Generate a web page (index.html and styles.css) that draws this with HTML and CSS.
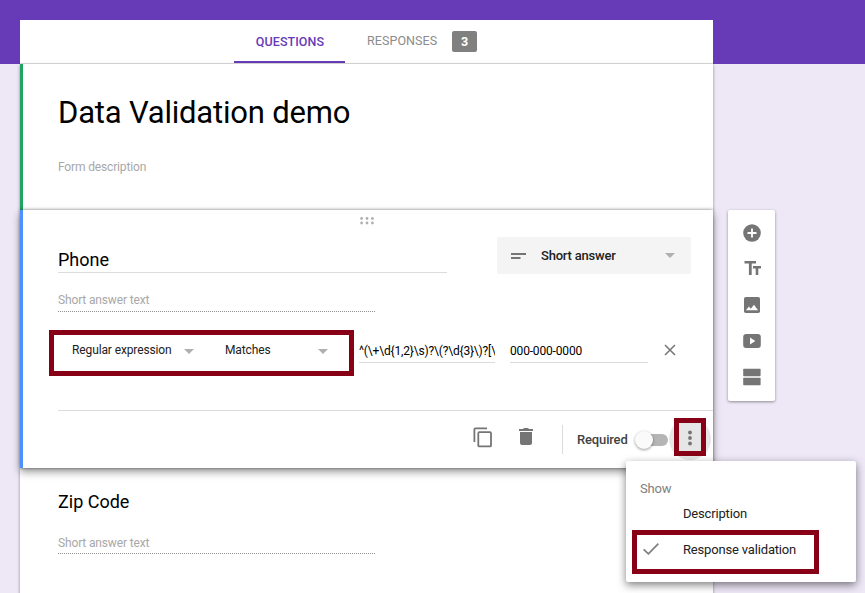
FILE: index.html
```html
<!DOCTYPE html>
<html lang="en">
<head>
<meta charset="utf-8">
<title>Data Validation demo</title>
<link rel="stylesheet" href="styles.css">
</head>
<body>
<div class="page">
  <main class="form">
    <nav class="tabs">
      <a class="tab tab-active">QUESTIONS</a>
      <a class="tab tab-responses">RESPONSES <span class="count">3</span></a>
    </nav>
    <section class="card intro">
      <h1 class="title">Data Validation demo</h1>
      <p class="hint">Form description</p>
    </section>
    <section class="card active">
      <svg class="drag" width="14" height="8" viewBox="0 0 14 8" fill="#b0b0b0"><circle cx="1.6" cy="1.5" r="1.4"/><circle cx="7" cy="1.5" r="1.4"/><circle cx="12.4" cy="1.5" r="1.4"/><circle cx="1.6" cy="6" r="1.4"/><circle cx="7" cy="6" r="1.4"/><circle cx="12.4" cy="6" r="1.4"/></svg>
      <div class="question-row">
        <div class="question-input">Phone</div>
        <div class="type-select">
          <svg width="15" height="6" viewBox="0 0 15 6" fill="#757575"><path d="M0 0h15v2H0zM0 4h9.500v2H0z"/></svg>
          <span class="type-name">Short answer</span>
          <span class="caret"></span>
        </div>
      </div>
      <div class="answer">Short answer text</div>
      <div class="validation">
        <div class="mark mark-rule">
          <span class="rule-kind">Regular expression</span><span class="caret"></span>
          <span class="rule-op">Matches</span><span class="caret"></span>
        </div>
        <div class="field pattern">^(\+\d{1,2}\s)?\(?\d{3}\)?[\</div>
        <div class="field message">000-000-0000</div>
        <svg class="clear" width="12" height="12" viewBox="0 0 12 12" stroke="#757575" stroke-width="1.500"><path d="M1 1l10 10M11 1L1 11"/></svg>
      </div>
      <div class="actions">
        <svg class="copy" width="20" height="21" viewBox="0 0 20 21" fill="none" stroke="#757575" stroke-width="1.800"><path d="M1.400 15V2.400a1 1 0 0 1 1-1H14"/><rect x="5.300" y="5.200" width="12.700" height="14.200" rx="1"/></svg>
        <svg class="trash" width="14" height="17" viewBox="0 0 14 17" fill="#757575"><path d="M0 1h4l1-1h4l1 1h4v2H0zM1 4h12v11a2 2 0 0 1-2 2H3a2 2 0 0 1-2-2z"/></svg>
        <span class="divider"></span>
        <span class="required">Required</span>
        <span class="toggle"><span class="knob"></span></span>
        <div class="more">
          <div class="mark mark-more"><svg width="4" height="16" viewBox="0 0 4 16" fill="#757575"><circle cx="2" cy="2.500" r="1.900"/><circle cx="2" cy="8" r="1.900"/><circle cx="2" cy="13.500" r="1.900"/></svg></div>
          <div class="menu">
            <div class="menu-title">Show</div>
            <div class="menu-item">Description</div>
            <div class="mark mark-item">
              <svg width="16" height="12" viewBox="0 0 16 12" fill="none" stroke="#808080" stroke-width="1.800"><path d="M.6 6.300l4.800 4.500L15.400.7"/></svg>
              <span>Response validation</span>
            </div>
          </div>
        </div>
      </div>
    </section>
    <section class="card next">
      <h2 class="question">Zip Code</h2>
      <div class="answer">Short answer text</div>
    </section>
  </main>
  <aside class="tools">
    <svg width="18" height="18" viewBox="0 0 18 18"><circle cx="9" cy="9" r="8.800" fill="#757575"/><path d="M9 4.500v9M4.500 9h9" stroke="#fff" stroke-width="1.800"/></svg>
    <svg width="18" height="18" viewBox="0 0 18 18" fill="#757575"><path d="M1.500 1H13v2.600H8.700V15H5.900V3.600H1.500zM10 6h8v2.500h-2.700V15h-2.600V8.500H10z"/></svg>
    <svg width="18" height="18" viewBox="0 0 18 18"><rect x="1" y="1" width="16" height="16" rx="1.800" fill="#757575"/><path d="M3 14.300l2.900-3.800 1.900 2.200 3.200-4 4 5.600z" fill="#fff"/></svg>
    <svg width="18" height="18" viewBox="0 0 18 18"><rect x=".2" y="2" width="17.600" height="14" rx="3" fill="#757575"/><path d="M7 5.400v7.200L12.300 9z" fill="#fff"/></svg>
    <svg width="18" height="18" viewBox="0 0 18 18" fill="#757575"><rect x=".2" y=".8" width="17.400" height="7.400" rx=".7"/><rect x=".2" y="9.800" width="17.400" height="7.400" rx=".7"/></svg>
  </aside>
</div>
</body>
</html>
```

FILE: styles.css
```css
* { box-sizing: border-box; }

body {
  margin: 0;
  height: 593px;
  overflow: hidden;
  background: linear-gradient(#673ab7 64px, #ede7f6 64px);
  font-family: Roboto, "Liberation Sans", sans-serif;
  font-size: 13px;
  color: #212121;
}

svg { display: block; flex: none; }

.page {
  display: flex;
  align-items: flex-start;
  gap: 15px;
  padding: 20px 0 0 20px;
}

.form { width: 693px; flex: none; }

.tabs {
  display: flex;
  height: 44px;
  padding-left: 214px;
  background: #fff;
  border-bottom: 1px solid #e0e0e0;
}

.tab {
  display: flex;
  align-items: center;
  height: 43px;
  font-size: 12.5px;
  letter-spacing: .07px;
  color: #8c8c8c;
}

.tab-active {
  width: 111px;
  justify-content: center;
  border-bottom: 2px solid #673ab7;
  padding: 2px 0 0 1px;
  font-weight: 500;
  color: #673ab7;
}

.tab-responses { margin-left: 22px; padding-bottom: 2px; }

.count {
  width: 25px;
  margin: 2px 0 0 15px;
  border-radius: 2px;
  background: #808080;
  color: #fff;
  font-weight: 700;
  line-height: 21px;
  text-align: center;
}

.card {
  background: #fff;
  box-shadow: 0 1px 3px rgba(0, 0, 0, .4);
}

.intro {
  height: 146px;
  padding: 28px 0 0 35px;
  border-left: 3px solid #1fa463;
}

.title {
  margin: 0;
  font-size: 31px;
  letter-spacing: -.2px;
  line-height: 42px;
  font-weight: 400;
  color: #000;
}

.hint {
  margin: 24px 0 0;
  font-size: 12px;
  letter-spacing: -.15px;
  line-height: 18px;
  color: #a8a8a8;
}

.active {
  position: relative;
  z-index: 1;
  height: 258px;
  padding: 7px 0 0 35px;
  border-left: 3px solid #4d90fe;
  box-shadow: 0 0 3px rgba(0, 0, 0, .45), 0 4px 8px rgba(0, 0, 0, .4);
}

.drag { margin-left: 302px; }

.question-row {
  display: flex;
  gap: 50px;
  margin-top: 12px;
  height: 37px;
}

.question-input {
  width: 389px;
  height: 36px;
  padding-top: 11px;
  border-bottom: 1px solid #dcdcdc;
  font-size: 18px;
  line-height: 24px;
  color: #000;
}

.type-select {
  display: flex;
  align-items: center;
  width: 194px;
  padding: 0 16px 0 14px;
  border-radius: 2px;
  background: #f4f4f4;
  font-weight: 500;
  letter-spacing: -.2px;
}

.type-name { flex: 1; margin-left: 15px; }

.caret {
  flex: none;
  border: 5px solid transparent;
  border-top-color: #b0b0b0;
  border-bottom: 0;
}

.answer {
  width: 317px;
  height: 22px;
  margin-top: 16px;
  border-bottom: 1px dotted #909090;
  font-size: 12px;
  letter-spacing: -.15px;
  line-height: 20px;
  color: #a8a8a8;
}

.mark { border: 5px solid #880015; }

.validation {
  display: flex;
  height: 46px;
  margin: 18px 0 0 -9px;
}

.mark-rule {
  display: flex;
  align-items: center;
  width: 305px;
  padding: 0 20px 6px 18px;
  font-size: 12px;
  letter-spacing: -.12px;
}

.rule-kind { width: 112px; }
.rule-op { width: 93px; margin-left: 31px; }
.rule-kind + .caret, .rule-op + .caret { margin-top: 3px; }

.field {
  height: 33px;
  padding-top: 11px;
  border-bottom: 1px solid #dcdcdc;
  font-size: 12px;
  letter-spacing: -.17px;
  line-height: 20px;
  color: #000;
  white-space: nowrap;
  overflow: hidden;
}

.pattern { width: 136px; margin-left: 5px; }
.message { width: 138px; margin-left: 15px; }
.clear { margin: 14px 0 0 16px; }

.actions {
  display: flex;
  align-items: center;
  height: 58px;
  margin-top: 34px;
  border-top: 1px solid #dcdcdc;
}

.copy { margin: -5px 0 0 415px; }
.trash { margin: -6px 0 0 26px; }
.divider { width: 1px; height: 29px; margin-left: 29px; background: #dcdcdc; }
.required { width: 58px; margin-left: 14px; font-weight: 500; letter-spacing: -.15px; color: #424242; }

.toggle {
  width: 33px;
  height: 12px;
  border-radius: 6px;
  background: linear-gradient(90deg, transparent 10px, #b5b5b5 10px);
}

.knob {
  display: block;
  width: 18px;
  height: 18px;
  margin-top: -3px;
  border-radius: 50%;
  background: #fafafa;
  box-shadow: 0 1px 3px rgba(0, 0, 0, .4);
}

.more {
  position: relative;
  display: flex;
  align-items: center;
  justify-content: center;
  width: 42px;
  height: 42px;
  margin: -2px 0 0 1px;
  border-radius: 50%;
  background: #e6e6e6;
}

.mark-more {
  display: flex;
  align-items: center;
  justify-content: center;
  flex: none;
  width: 32px;
  height: 38px;
  margin-top: -4px;
  padding-top: 2px;
}

.menu {
  position: absolute;
  left: -43px;
  top: 43px;
  width: 230px;
  height: 121px;
  padding: 18px 0 0 6px;
  border-radius: 2px;
  background: #fff;
  box-shadow: 0 3px 9px rgba(0, 0, 0, .5);
  letter-spacing: -.17px;
}

.menu-title { margin-left: 8px; line-height: 20px; color: #808080; }
.menu-item { margin: 5px 0 0 51px; line-height: 20px; }

.mark-item {
  display: flex;
  align-items: center;
  gap: 24px;
  width: 187px;
  height: 44px;
  margin-top: 6px;
  padding: 0 0 5px 6px;
}

.next { height: 150px; padding: 21px 0 0 38px; }

.question {
  margin: 0;
  font-size: 18px;
  line-height: 26px;
  font-weight: 400;
  color: #000;
}

.next .answer { height: 22px; margin-top: 17px; line-height: 22px; }

.tools {
  display: flex;
  flex-direction: column;
  align-items: center;
  gap: 18px;
  width: 47px;
  height: 191px;
  margin-top: 190px;
  padding: 14px 0 0;
  border-radius: 2px;
  background: #fff;
  box-shadow: 0 1px 3px rgba(0, 0, 0, .4);
}
```
